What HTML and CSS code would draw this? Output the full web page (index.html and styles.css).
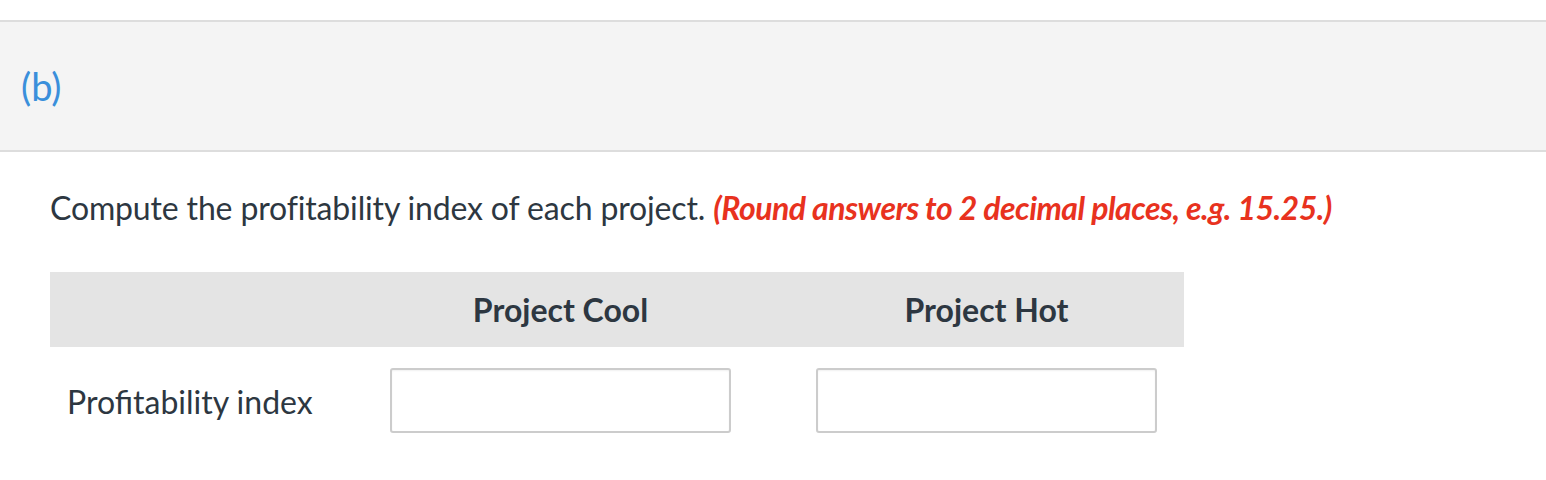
FILE: index.html
```html
<!DOCTYPE html>
<html>
<head>
<meta charset="utf-8">
<link rel="stylesheet" href="styles.css">
</head>
<body>
<div class="part-header"><span class="part-label">(b)</span></div>
<div class="content">
  <p class="question">Compute the profitability index of each project. <em class="hint">(Round answers to 2 decimal places, e.g. 15.25.)</em></p>
  <div class="table">
    <div class="thead">
      <div class="th"></div>
      <div class="th">Project Cool</div>
      <div class="th">Project Hot</div>
    </div>
    <div class="trow">
      <div class="td label">Profitability index</div>
      <div class="td"><input class="answer" type="text"></div>
      <div class="td"><input class="answer" type="text"></div>
    </div>
  </div>
</div>
</body>
</html>
```
FILE: styles.css
```css
html, body {
  margin: 0;
  padding: 0;
  background: #ffffff;
  font-family: Lato, "Open Sans", sans-serif;
  color: #2d3741;
}
body {
  padding-top: 20px;
}
.part-header {
  background: #f4f4f4;
  border-top: 2px solid #dddddd;
  border-bottom: 2px solid #dddddd;
  height: 128px;
  display: flex;
  align-items: center;
  padding-left: 21px;
}
.part-label {
  color: #3a8fdb;
  font-size: 38px;
  line-height: 1;
  margin-top: 0px;
}
.content {
  padding-left: 50px;
}
.question {
  margin: 0;
  padding-top: 36px;
  font-size: 32px;
  line-height: 40px;
  letter-spacing: -0.15px;
}
.hint {
  color: #e8321e;
  font-weight: 700;
  font-style: italic;
  letter-spacing: -0.5px;
}
.table {
  margin-top: 44px;
  width: 1134px;
}
.thead, .trow {
  display: grid;
  grid-template-columns: 255px 341px 341px;
  column-gap: 85px;
}
.thead {
  background: #e4e4e4;
  height: 75px;
  align-items: center;
}
.th {
  text-align: center;
  font-weight: 700;
  font-size: 32px;
  line-height: 1;
}
.trow {
  padding-top: 21px;
  align-items: center;
}
.label {
  font-size: 32px;
  padding-left: 17px;
  padding-top: 2px;
  white-space: nowrap;
}
.answer {
  display: block;
  box-sizing: border-box;
  width: 341px;
  height: 65px;
  border: 2px solid #cccccc;
  border-radius: 3px;
  background: #ffffff;
  box-shadow: inset 0 1px 2px rgba(0,0,0,0.06);
  margin: 0;
  font-family: inherit;
  font-size: 26px;
}
```
